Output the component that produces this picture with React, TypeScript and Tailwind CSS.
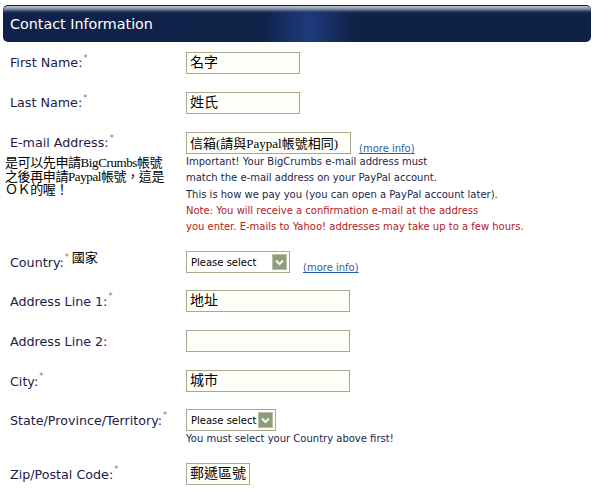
import React from 'react';

const labelFont = "font-['DejaVu_Sans',sans-serif]";
const cjk = "font-['Liberation_Serif','Noto_Sans_CJK_TC',serif]";

function Star() {
    return <sup className="text-[8px] text-[#777] ml-[1px]">*</sup>;
}

function Label({ text, req = true, extra }: { text: string; req?: boolean; extra?: React.ReactNode }) {
    return (
        <div className={`h-[22px] flex items-center text-[12.7px] text-[#1c1a4a] whitespace-nowrap ${labelFont}`}>
            <span>{text}</span>
            {req && <Star />}
            {extra}
        </div>
    );
}

function Field({ w, value, size = 'text-[14px]' }: { w: string; value?: string; size?: string }) {
    return (
        <div className={`${w} h-[22px] border border-[#aaa88c] bg-[#fffffa] flex items-center px-[3px] ${size} leading-none text-black whitespace-nowrap overflow-hidden ${cjk}`}>
            {value}
        </div>
    );
}

function Select({ w }: { w: string }) {
    return (
        <div className={`${w} h-[22px] border border-[#aaa88c] bg-white flex items-center justify-between pl-[4px] pr-[2px] text-[10px] text-black whitespace-nowrap ${labelFont}`}>
            <span>Please select</span>
            <span className="w-[15px] h-[16px] shrink-0 bg-[#8e9d7c] border border-[#b5c0a5] flex items-center justify-center">
                <svg width="9" height="7" viewBox="0 0 9 7">
                    <path d="M1 1.5 L4.5 5 L8 1.5" stroke="#f4f6ee" strokeWidth="2" fill="none" />
                </svg>
            </span>
        </div>
    );
}

function MoreInfo({ className = '' }: { className?: string }) {
    return (
        <a href="#" className={`text-[10px] text-[#2a5ea8] underline whitespace-nowrap ${labelFont} ${className}`}>
            (more info)
        </a>
    );
}

function Row({ label, children, className = '' }: { label: React.ReactNode; children: React.ReactNode; className?: string }) {
    return (
        <div className={`flex ${className}`}>
            <div className="w-[176px] shrink-0">{label}</div>
            <div className="flex-1">{children}</div>
        </div>
    );
}

export default function App() {
    return (
        <div className="w-[594px] h-[491px] bg-white overflow-hidden">
            {/* Header bar */}
            <div className="mx-[3px] mt-[5px] h-[37px] rounded-[5px] border-t border-[#1a1c2a] bg-[linear-gradient(to_bottom,rgba(205,210,220,0.95)_0px,rgba(150,158,178,0.85)_3px,rgba(40,60,100,0.4)_6px,rgba(15,33,71,0)_8px),linear-gradient(to_right,#10224a_0%,#0f2147_44%,#1e3c7c_52%,#0f2147_60%,#0f2147_100%)] flex items-center pl-[7px] pt-[2px]">
                <span className={`text-white text-[14.3px] ${labelFont}`}>Contact Information</span>
            </div>

            <div className="pl-[10px] pt-[10px]">
                <Row label={<Label text="First Name:" />}>
                    <Field w="w-[114px]" value="名字" />
                </Row>

                <Row label={<Label text="Last Name:" />} className="mt-[18px]">
                    <Field w="w-[114px]" value="姓氏" />
                </Row>

                <Row
                    className="mt-[18px]"
                    label={
                        <div>
                            <Label text="E-mail Address:" />
                            <p className={`-ml-[5px] mt-[2px] text-[13px] leading-[13.5px] text-black tracking-[-0.4px] whitespace-nowrap ${cjk}`}>
                                是可以先申請BigCrumbs帳號<br />
                                之後再申請Paypal帳號，這是<br />
                                ＯＫ的喔！
                            </p>
                        </div>
                    }
                >
                    <div className="flex items-end gap-[8px]">
                        <Field w="w-[165px]" value="信箱(請與Paypal帳號相同)" size="text-[13px]" />
                        <MoreInfo className="mb-[-2px]" />
                    </div>
                    <div className={`text-[10px] leading-[16.3px] whitespace-nowrap ${labelFont}`}>
                        <p className="text-[#1c1f48]">Important! Your BigCrumbs e-mail address must</p>
                        <p className="text-[#1c1f48]">match the e-mail address on your PayPal account.</p>
                        <p className="text-[#1c1f48]">This is how we pay you (you can open a PayPal account later).</p>
                        <p className="text-[#b3201e]">Note: You will receive a confirmation e-mail at the address</p>
                        <p className="text-[#b3201e]">you enter. E-mails to Yahoo! addresses may take up to a few hours.</p>
                    </div>
                </Row>

                <Row
                    className="mt-[16px]"
                    label={
                        <Label
                            text="Country:"
                            extra={<span className={`ml-[3px] -mt-[10px] text-[13px] text-black ${cjk}`}>國家</span>}
                        />
                    }
                >
                    <div className="flex items-end gap-[13px]">
                        <Select w="w-[104px]" />
                        <MoreInfo className="mb-[-2px]" />
                    </div>
                </Row>

                <Row label={<Label text="Address Line 1:" />} className="mt-[17px]">
                    <Field w="w-[164px]" value="地址" />
                </Row>

                <Row label={<Label text="Address Line 2:" req={false} />} className="mt-[18px]">
                    <Field w="w-[164px]" />
                </Row>

                <Row label={<Label text="City:" />} className="mt-[18px]">
                    <Field w="w-[164px]" value="城市" />
                </Row>

                <Row label={<Label text="State/Province/Territory:" />} className="mt-[17px]">
                    <Select w="w-[90px]" />
                    <p className={`text-[10px] leading-[15px] text-[#1c1f48] whitespace-nowrap ${labelFont}`}>
                        You must select your Country above first!
                    </p>
                </Row>

                <Row label={<Label text="Zip/Postal Code:" />} className="mt-[17px]">
                    <Field w="w-[64px]" value="郵遞區號" />
                </Row>
            </div>
        </div>
    );
}
